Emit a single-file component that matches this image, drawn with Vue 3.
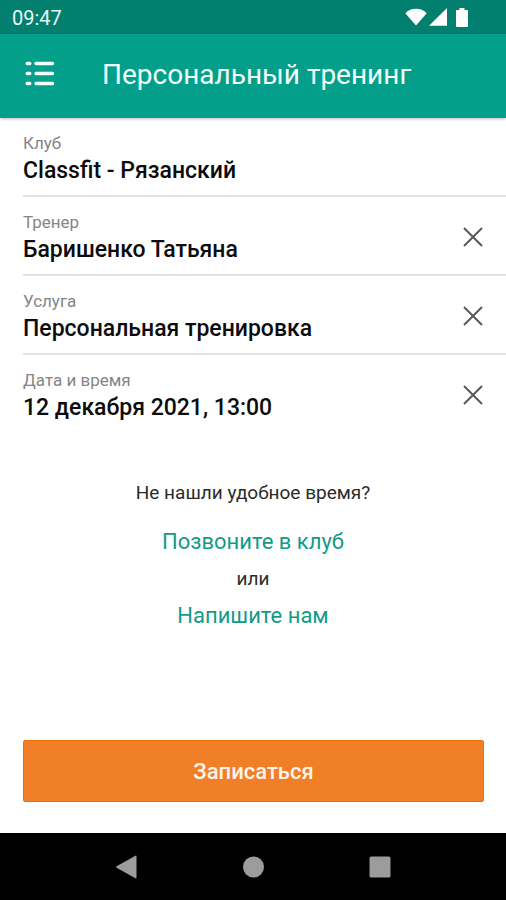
<script setup>
import { ref } from 'vue'

const fields = ref([
  { label: 'Клуб', value: 'Classfit - Рязанский', clearable: false },
  { label: 'Тренер', value: 'Баришенко Татьяна', clearable: true },
  { label: 'Услуга', value: 'Персональная тренировка', clearable: true },
  { label: 'Дата и время', value: '12 декабря 2021, 13:00', clearable: true },
])

function clearField(field) {
  field.value = ''
}
</script>

<template>
  <div class="screen">
    <div class="status-bar">
      <span class="clock">09:47</span>
      <div class="status-icons">
        <svg width="22" height="18" viewBox="0 0 22 18" aria-hidden="true">
          <path d="M0.3 5.2Q4.6 0.8 11 0.8T21.7 5.2L11 17.6Z" />
        </svg>
        <svg width="18" height="18" viewBox="0 0 18 18" aria-hidden="true">
          <path d="M0 17.8L18 0V17.8Z" />
        </svg>
        <svg class="battery" width="12" height="19" viewBox="0 0 12 19" aria-hidden="true">
          <path d="M3.5 0h5v2H11q1 0 1 1v15q0 1-1 1H1q-1 0-1-1V3q0-1 1-1h2.500z" />
        </svg>
      </div>
    </div>

    <header class="app-bar">
      <button class="menu" type="button" aria-label="Меню">
        <svg width="30" height="25" viewBox="0 0 30 25" aria-hidden="true">
          <g stroke="#f2fffc" stroke-width="3.400" stroke-linecap="round">
            <path d="M2.200 2.500H4.800M11 2.500H27.500M2.200 12.500H4.800M11 12.500H27.500M2.200 22.500H4.800M11 22.500H27.500" />
          </g>
        </svg>
      </button>
      <h1 class="title">Персональный тренинг</h1>
    </header>

    <main class="content">
      <ul class="fields">
        <li v-for="field in fields" :key="field.label" class="field">
          <div class="field-text">
            <span class="label">{{ field.label }}</span>
            <span class="value">{{ field.value }}</span>
          </div>
          <button
            v-if="field.clearable"
            class="clear"
            type="button"
            :aria-label="'Очистить: ' + field.label"
            @click="clearField(field)"
          >
            <svg width="20" height="20" viewBox="0 0 20 20" aria-hidden="true">
              <path d="M1 1L19 19M19 1L1 19" fill="none" stroke="#595959" stroke-width="2" />
            </svg>
          </button>
        </li>
      </ul>

      <section class="help">
        <p class="note">Не нашли удобное время?</p>
        <a class="link" href="#call">Позвоните в клуб</a>
        <p class="note">или</p>
        <a class="link" href="#write">Напишите нам</a>
      </section>

      <button class="submit" type="button">Записаться</button>
    </main>

    <nav class="nav-bar">
      <button type="button" aria-label="Назад">
        <svg width="24" height="24" viewBox="0 0 24 24" aria-hidden="true">
          <path d="M21.500 1.400V22.600Q21.500 23.800 20.400 23.200L1.600 12.800Q0.600 12 1.600 11.200L20.400 0.800Q21.500 0.200 21.500 1.400Z" />
        </svg>
      </button>
      <button type="button" aria-label="Домой">
        <svg width="24" height="24" viewBox="0 0 24 24" aria-hidden="true">
          <circle cx="12.500" cy="12" r="10.500" />
        </svg>
      </button>
      <button type="button" aria-label="Недавние">
        <svg width="24" height="24" viewBox="0 0 24 24" aria-hidden="true">
          <rect x="1.500" y="1.500" width="21" height="21" rx="1.500" />
        </svg>
      </button>
    </nav>
  </div>
</template>

<style>
body {
  background: #fff;
}
</style>

<style scoped>
.screen {
  display: flex;
  flex-direction: column;
  min-height: 100vh;
  font-family: Roboto, "Liberation Sans", sans-serif;
  color: #0c0c0c;
}

button {
  padding: 0;
  border: 0;
  background: none;
  font: inherit;
  color: inherit;
  cursor: pointer;
}

svg {
  display: block;
}

.status-bar {
  display: flex;
  align-items: center;
  justify-content: space-between;
  height: 34px;
  padding: 0 38px 0 12px;
  background: #037f70;
  color: #e8f7f4;
}

.clock {
  font-size: 20px;
  line-height: 24px;
  padding-top: 2px;
}

.status-icons {
  display: flex;
  align-items: center;
  gap: 2px;
  fill: #fff;
}

.battery {
  margin-left: 7px;
}

.app-bar {
  display: flex;
  align-items: center;
  gap: 47px;
  height: 84px;
  padding: 0 25px 5px;
  box-sizing: border-box;
  background: #049f8b;
  box-shadow: 0 1px 3px rgba(0, 0, 0, 0.25);
  color: #f2fffc;
}

.title {
  margin: 3px 0 0;
  font-size: 28px;
  line-height: 36px;
  font-weight: 400;
  white-space: nowrap;
}

.content {
  display: flex;
  flex: 1;
  flex-direction: column;
}

.fields {
  margin: 0;
  padding: 0 0 0 23px;
  list-style: none;
}

.field {
  display: flex;
  align-items: center;
  justify-content: space-between;
  padding: 15px 23px 11px 0;
  border-bottom: 2px solid #e2e2e2;
}

.field:last-child {
  border-bottom-color: transparent;
}

.field-text {
  display: flex;
  flex-direction: column;
  gap: 5px;
}

.clear {
  margin-bottom: 2px;
}

.label {
  font-size: 17px;
  line-height: 20px;
  color: #858585;
}

.value {
  min-height: 26px;
  font-size: 23px;
  line-height: 26px;
  font-weight: 500;
}

.help {
  display: flex;
  flex-direction: column;
  align-items: center;
  gap: 11px;
  padding: 47px 23px 24px;
}

.note {
  margin: 0;
  font-size: 19px;
  line-height: 24px;
  color: #2b2b2b;
}

.note:first-child {
  margin-bottom: 12px;
}

.link {
  font-size: 22px;
  line-height: 28px;
  color: #129b86;
  text-decoration: none;
}

.submit {
  height: 62px;
  margin: auto 22px 31px 23px;
  padding-top: 2px;
  border-radius: 3px;
  background: #f07f28;
  box-shadow: inset 0 0 0 1px #e8710f;
  color: #fff4ea;
  font-size: 22px;
  line-height: 28px;
  font-weight: 500;
}

.nav-bar {
  display: flex;
  height: 67px;
  padding: 0 12.5%;
  background: #000;
  fill: #9c9c9c;
}

.nav-bar button {
  display: flex;
  flex: 1;
  align-items: center;
  justify-content: center;
}
</style>
